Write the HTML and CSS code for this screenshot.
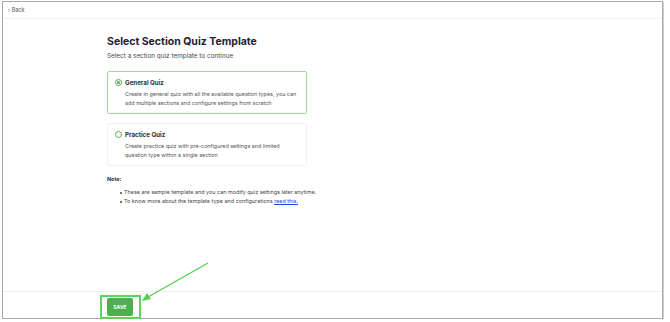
FILE: index.html
```html
<!DOCTYPE html>
<html>
<head>
<meta charset="utf-8">
<link rel="stylesheet" href="styles.css">
</head>
<body>
<div class="frame">
  <header class="topbar"><span class="back">&lsaquo; Back</span></header>
  <main class="content">
    <h1 class="title">Select Section Quiz Template</h1>
    <p class="subtitle">Select a section quiz template to continue</p>
    <div class="card card-active">
      <div class="card-head"><span class="radio radio-on"></span><span class="card-title">General Quiz</span></div>
      <p class="card-desc">Create in general quiz with all the available question types, you can<br>add multiple sections and configure settings from scratch</p>
    </div>
    <div class="card">
      <div class="card-head"><span class="radio"></span><span class="card-title">Practice Quiz</span></div>
      <p class="card-desc">Create practice quiz with pre-configured settings and limited<br>question type within a single section</p>
    </div>
    <div class="note">
      <p class="note-label">Note:</p>
      <ul class="note-list">
        <li>These are sample template and you can modify quiz settings later anytime.</li>
        <li>To know more about the template type and configurations <a class="link" href="#">read this.</a></li>
      </ul>
    </div>
  </main>
  <footer class="footer"><button class="save">SAVE</button></footer>
  <div class="highlight"></div>
  <svg class="arrow" width="80" height="50" viewBox="0 0 80 50">
    <line x1="74" y1="2" x2="14" y2="36" stroke="#4fcf4f" stroke-width="1.2"/>
    <polygon points="8,40 13,32 17,38" fill="#4fcf4f"/>
  </svg>
</div>
</body>
</html>
```
FILE: styles.css
```css
* { box-sizing: border-box; }
html, body { margin: 0; padding: 0; background: #fff; }
body { font-family: Inter, "Noto Sans", sans-serif; color: #1f2233; }
.frame {
  position: relative;
  margin: 1px 0 0 2px;
  width: 661px;
  height: 318px;
  border: 1px solid #a9a9a9;
  box-shadow: 1px 1px 0 #cfcfcf;
  display: flex;
  flex-direction: column;
}
.topbar {
  height: 17px;
  border-bottom: 1px solid #f1f1f1;
  display: flex;
  align-items: center;
  padding-left: 5px;
}
.back { font-size: 5.5px; color: #555; }
.content {
  flex: 1;
  padding: 16px 0 0 104px;
}
.title {
  margin: 0;
  font-size: 10.5px;
  line-height: 14px;
  font-weight: 700;
  color: #1e2233;
}
.subtitle {
  margin: 2px 0 0;
  font-size: 6.4px;
  line-height: 10px;
  color: #4a4a4a;
}
.card {
  width: 200px;
  margin-top: 9px;
  border: 1px solid #f1f1f1;
  border-radius: 2px;
  padding: 6px 8px 5px 7px;
}
.subtitle + .card { margin-top: 10px; }
.card-active { border-color: #9edc9e; }
.card-head { display: flex; align-items: center; height: 9px; gap: 3px; }
.radio {
  width: 7px; height: 7px; border-radius: 50%;
  border: 1px solid #4caf50;
  flex: none;
  position: relative;
}
.radio-on::after {
  content: ""; position: absolute; left: 1px; top: 1px;
  width: 3px; height: 3px; border-radius: 50%; background: #4caf50;
}
.card-title { font-size: 6.2px; font-weight: 700; color: #2a2d3a; }
.card-desc {
  margin: 3px 0 0 10px;
  font-size: 5.4px;
  line-height: 9px;
  color: #555;
  white-space: nowrap;
}
.note { margin-top: 9px; }
.note-label { margin: 0; font-size: 5.4px; font-weight: 700; line-height: 9px; color: #2a2d3a; }
.note-list {
  margin: 4px 0 0 0;
  padding: 0 0 0 17px;
  list-style: none;
  font-size: 5.45px;
  line-height: 9px;
  color: #444;
}
.note-list li { position: relative; }
.note-list li::before {
  content: ""; position: absolute; left: -4px; top: 3.5px;
  width: 2px; height: 2px; border-radius: 50%; background: #444;
}
.link { color: #2443d6; text-decoration: underline; }
.footer {
  height: 27px;
  border-top: 1px solid #efefef;
  padding: 6px 0 0 104px;
  display: flex;
  align-items: flex-start;
}
.save {
  width: 26px; height: 18px;
  border: none; border-radius: 2px;
  background: #4cb050;
  color: #fff;
  font-family: Inter, sans-serif;
  font-size: 5px; font-weight: 700;
  padding: 0;
}
.highlight {
  position: absolute;
  left: 97px; top: 293px;
  width: 41px; height: 24px;
  border: 2px solid #5cd35c;
}
.arrow {
  position: absolute;
  left: 131px; top: 259px;
}
```
